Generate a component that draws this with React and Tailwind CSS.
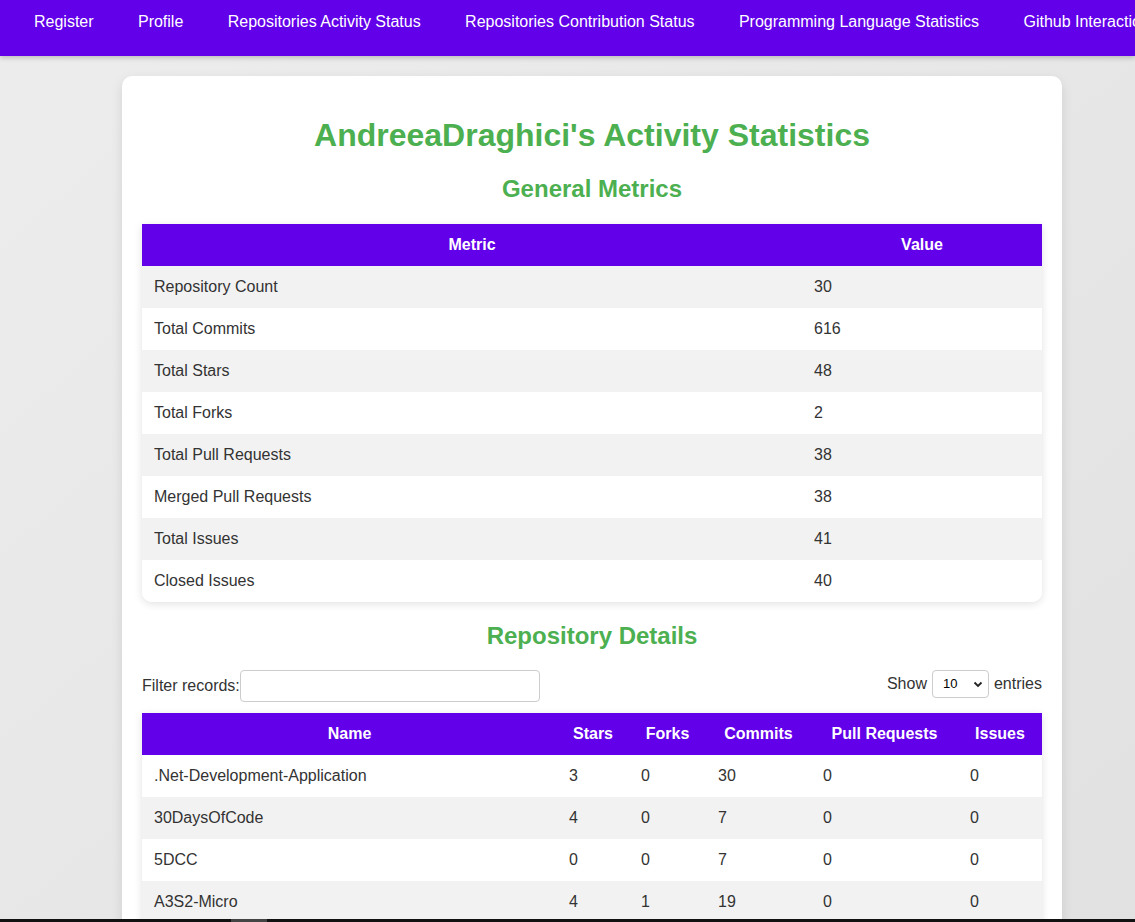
import React from 'react';

const navLinks = [
  'Register',
  'Profile',
  'Repositories Activity Status',
  'Repositories Contribution Status',
  'Programming Language Statistics',
  'Github Interaction Statistics',
];

const metrics = [
  ['Repository Count', 30],
  ['Total Commits', 616],
  ['Total Stars', 48],
  ['Total Forks', 2],
  ['Total Pull Requests', 38],
  ['Merged Pull Requests', 38],
  ['Total Issues', 41],
  ['Closed Issues', 40],
];

const repos = [
  ['.Net-Development-Application', 3, 0, 30, 0, 0],
  ['30DaysOfCode', 4, 0, 7, 0, 0],
  ['5DCC', 0, 0, 7, 0, 0],
  ['A3S2-Micro', 4, 1, 19, 0, 0],
  ['Advent-of-Code', 1, 0, 12, 0, 0],
];

const repoCols = [
  ['Name', 'w-[415px]'],
  ['Stars', 'w-[72px]'],
  ['Forks', 'w-[77px]'],
  ['Commits', 'w-[105px]'],
  ['Pull Requests', 'w-[147px]'],
  ['Issues', 'w-[84px]'],
];

export default function App() {
  return (
    <div className="min-h-screen bg-gradient-to-br from-[#ededed] to-[#e1e1e1] font-['Liberation_Sans',Arial,sans-serif] text-[16px] text-[#333] overflow-hidden">
      {/* top nav */}
      <nav className="h-[56px] bg-[#6200ea] flex items-start gap-[44.4px] pl-[34px] pt-[13px] whitespace-nowrap overflow-hidden shadow-[0_2px_5px_rgba(0,0,0,0.2)] relative z-10">
        {navLinks.map((l) => (
          <a key={l} className="text-white leading-[18px] shrink-0">{l}</a>
        ))}
      </nav>

      <div className="pl-[122px] pt-[20px]">
        <div className="w-[940px] bg-white rounded-[10px] p-[20px] shadow-[0_4px_12px_rgba(0,0,0,0.1)]">
          <h1 className="text-center text-[#4caf50] font-bold text-[32px] leading-[37px] my-[21px]">
            AndreeaDraghici's Activity Statistics
          </h1>
          <h2 className="text-center text-[#4caf50] font-bold text-[24px] leading-[28px] mb-[21px]">
            General Metrics
          </h2>

          <div className="rounded-b-[10px] overflow-hidden shadow-[0_2px_8px_rgba(0,0,0,0.12)]">
            <table className="w-full table-fixed border-collapse">
              <thead>
                <tr className="bg-[#6200ea] text-white h-[42px]">
                  <th className="w-[660px] font-bold">Metric</th>
                  <th className="w-[240px] font-bold">Value</th>
                </tr>
              </thead>
              <tbody>
                {metrics.map(([k, v], i) => (
                  <tr key={k} className={`h-[42px] ${i % 2 === 0 ? 'bg-[#f2f2f2]' : 'bg-white'}`}>
                    <td className="px-[12px]">{k}</td>
                    <td className="px-[12px]">{v}</td>
                  </tr>
                ))}
              </tbody>
            </table>
          </div>

          <h2 className="text-center text-[#4caf50] font-bold text-[24px] leading-[28px] mt-[20px] mb-[20px]">
            Repository Details
          </h2>

          <div className="flex justify-between items-start mb-[11px]">
            <label className="flex items-center h-[32px]">
              Filter records:
              <input className="w-[300px] h-[32px] border border-[#ccc] rounded-[4px] px-[6px] outline-none" />
            </label>
            <div className="flex items-center h-[28px] gap-[5px]">
              <span>Show</span>
              <div className="w-[57px] h-[28px] border border-[#ccc] rounded-[4px] flex items-center justify-between pl-[10px] pr-[5px] text-[13px] text-black">
                <span>10</span>
                <svg width="10" height="10" viewBox="0 0 10 10">
                  <path d="M1.5 3.5 L5 7 L8.5 3.5" fill="none" stroke="#222" strokeWidth="1.8" />
                </svg>
              </div>
              <span>entries</span>
            </div>
          </div>

          <div className="rounded-b-[10px] overflow-hidden shadow-[0_2px_8px_rgba(0,0,0,0.12)]">
            <table className="w-full table-fixed border-collapse">
              <thead>
                <tr className="bg-[#6200ea] text-white h-[42px]">
                  {repoCols.map(([c, w]) => (
                    <th key={c} className={`${w} font-bold`}>{c}</th>
                  ))}
                </tr>
              </thead>
              <tbody>
                {repos.map((r, i) => (
                  <tr key={r[0]} className={`h-[42px] ${i % 2 === 1 ? 'bg-[#f2f2f2]' : 'bg-white'}`}>
                    {r.map((v, j) => (
                      <td key={j} className="px-[12px]">{v}</td>
                    ))}
                  </tr>
                ))}
              </tbody>
            </table>
          </div>
        </div>
      </div>

      {/* bottom edge strip */}
      <div className="fixed bottom-0 left-0 w-full h-[3px] bg-[#111]">
        <div className="ml-[231px] w-[36px] h-full bg-[#444]" />
      </div>
    </div>
  );
}
